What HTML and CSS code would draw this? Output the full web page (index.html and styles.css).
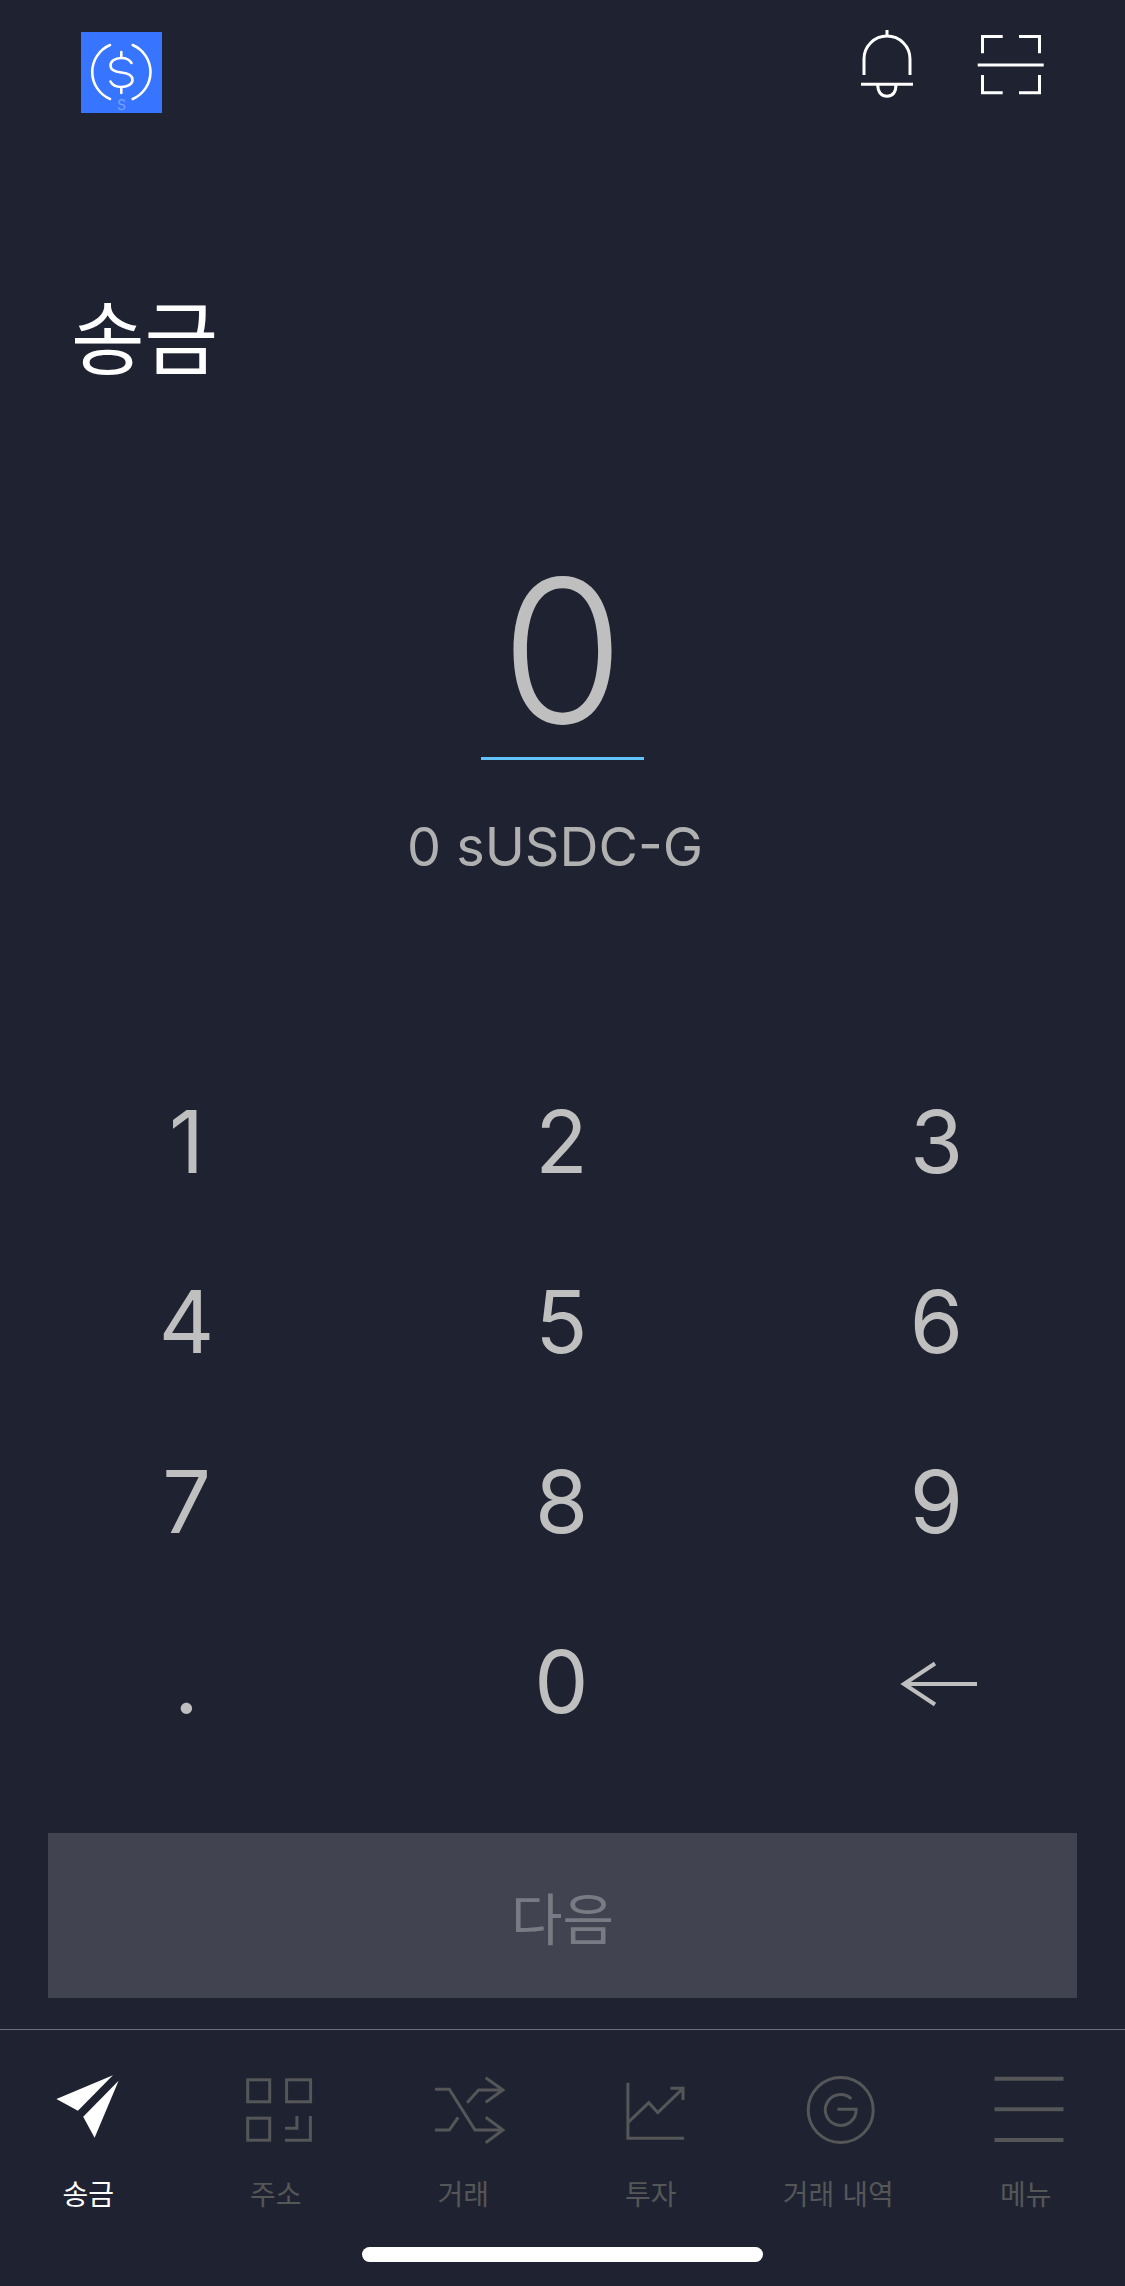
FILE: index.html
```html
<!DOCTYPE html>
<html lang="ko">
<head>
  <meta charset="UTF-8">
  <title>송금</title>
  <link rel="stylesheet" href="styles.css">
</head>
<body>
  <div class="app">
    <header class="header">
      <svg class="logo" viewBox="0 0 81 81" width="81" height="81">
        <rect width="81" height="81" fill="#3774ff"/>
        <g fill="none" stroke="#fff" stroke-width="2.6" stroke-linecap="round">
          <path d="M29 13A29.4 29.4 0 0 0 29 67"/>
          <path d="M51.7 13A29.4 29.4 0 0 1 51.7 67"/>
          <path d="M50.5 31C48.5 27.5 44.5 26 40.3 26C33.5 26 29.5 29.5 29.5 33.5C29.5 38.5 35 40 40.3 40.5C46 41 51.5 43 51.5 48C51.5 52.5 46 55 40.3 55C35.5 55 31.5 53.5 29.5 49.5"/>
          <path d="M40.3 20V25M40.3 56V61"/>
        </g>
        <text class="logo-s" x="40.5" y="78" text-anchor="middle">S</text>
      </svg>
      <div class="header-icons">
        <svg viewBox="0 0 60 72" width="60" height="72" fill="none" stroke="#fff" stroke-width="3">
          <path d="M7 47V31A23 23 0 0 1 53 31V47"/>
          <path d="M30 2V8"/>
          <path d="M4 56.3H56"/>
          <path d="M20.7 56.3C20.7 65 25 68.2 30 68.2C35 68.2 39 65 39 56.3"/>
        </svg>
        <svg viewBox="0 0 72 72" width="72" height="72" fill="none" stroke="#fff" stroke-width="3">
          <path d="M6.5 25.3V8.5H26.7"/>
          <path d="M43 8.5H63.5V25.3"/>
          <path d="M1.7 37H67.7"/>
          <path d="M6.5 47V64.8H26.7"/>
          <path d="M43 64.8H63.5V47"/>
        </svg>
      </div>
    </header>

    <h1 class="title">송금</h1>

    <div class="amount">0</div>
    <div class="converted">0 sUSDC-G</div>

    <div class="keypad">
      <div class="key">1</div>
      <div class="key">2</div>
      <div class="key">3</div>
      <div class="key">4</div>
      <div class="key">5</div>
      <div class="key">6</div>
      <div class="key">7</div>
      <div class="key">8</div>
      <div class="key">9</div>
      <div class="key">.</div>
      <div class="key">0</div>
      <div class="key">
        <svg class="back" viewBox="0 0 78 46" width="78" height="46" fill="none" stroke="#bfbfbf" stroke-width="4">
          <path d="M78 23H5"/>
          <path d="M36 2.500L5 23L36 43.500"/>
        </svg>
      </div>
    </div>

    <button class="next">다음</button>

    <nav class="nav">
      <div class="nav-item active">
        <svg viewBox="0 0 100 72" width="100" height="72" fill="#fff">
          <path d="M18.400 25L74.900 1.300L39.900 36.700Z"/>
          <path d="M80.600 6.700L45.200 42.700L56.600 63.700Z"/>
        </svg>
        <span>송금</span>
      </div>
      <div class="nav-item">
        <svg viewBox="0 0 100 72" width="100" height="72" fill="none" stroke="#555658" stroke-width="3">
          <rect x="21.700" y="5.800" width="22" height="22"/>
          <rect x="60.600" y="5.800" width="24" height="22"/>
          <rect x="21.700" y="44.200" width="22" height="22"/>
          <path d="M84.400 42V66.200H59"/>
          <path d="M59 54.300H70.900V42"/>
        </svg>
        <span>주소</span>
      </div>
      <div class="nav-item">
        <svg viewBox="0 0 100 72" width="100" height="72" fill="none" stroke="#555658" stroke-width="3">
          <path d="M22 15.300H36.300L62 56H88.800"/>
          <path d="M72.700 3.700L89.900 16L72.700 28.300"/>
          <path d="M88.800 16H65.600L54.100 28.700"/>
          <path d="M72.700 43.300L89.900 56L72.700 68.700"/>
          <path d="M22 56H36.300L45.200 43.300"/>
        </svg>
        <span>거래</span>
      </div>
      <div class="nav-item">
        <svg viewBox="0 0 100 72" width="100" height="72" fill="none" stroke="#555658" stroke-width="3">
          <path d="M26.900 8.700V64.300H83.100"/>
          <path d="M26.900 48.700L47.800 28.700L56.800 38.700L82 14.300"/>
          <path d="M69.400 14.300H82V26"/>
        </svg>
        <span>투자</span>
      </div>
      <div class="nav-item">
        <svg viewBox="0 0 100 72" width="100" height="72" fill="none" stroke="#555658" stroke-width="3">
          <circle cx="52.700" cy="36" r="32.500"/>
          <path d="M63.300 24.800A15.400 15.400 0 1 0 68.100 35.300H49.500"/>
        </svg>
        <span>거래 내역</span>
      </div>
      <div class="nav-item">
        <svg viewBox="0 0 100 72" width="100" height="72" fill="none" stroke="#555658" stroke-width="4">
          <path d="M18.500 4.700H87.500"/>
          <path d="M18.500 35.300H87.500"/>
          <path d="M18.500 66H87.500"/>
        </svg>
        <span>메뉴</span>
      </div>
    </nav>

    <div class="home-bar"></div>
  </div>
</body>
</html>
```

FILE: styles.css
```css
html, body { margin: 0; padding: 0; background: #1f2331; }
.app { width: 1125px; height: 2286px; overflow: hidden; font-family: Inter, "Noto Sans CJK KR", sans-serif; }

.header { display: flex; justify-content: space-between; align-items: flex-start; height: 113px; padding: 0 77px 0 81px; }
.logo { display: block; margin-top: 32px; }
.logo-s { font-family: Inter, sans-serif; font-size: 14px; fill: #7aa2ff; }
.header-icons { display: flex; gap: 59px; padding-top: 28px; }
.header-icons svg { display: block; }

.title { margin: 170px 0 0 71px; font-family: "Noto Sans CJK KR", sans-serif; font-size: 80px; font-weight: 400; line-height: 100px; color: #fff; }

.amount { width: 163px; height: 207px; margin: 167px auto 0; border-bottom: 3px solid #62c3fb; text-align: center; font-size: 200px; font-weight: 300; line-height: 200px; color: #bfbfbf; }
.converted { margin-top: 57px; padding-right: 15px; text-align: center; font-size: 54px; font-weight: 400; line-height: 60px; color: #b0b0b0; }

.keypad { display: grid; grid-template-columns: repeat(3, 375px); grid-auto-rows: 180px; margin: 175px 0 0 -1px; }
.key { display: flex; align-items: center; justify-content: center; font-size: 86px; font-weight: 400; color: #bfbfbf; }
.back { margin: 3px 0 0 3px; }

.next { display: block; width: 1029px; height: 165px; margin: 61px 0 0 48px; padding: 0; border: 0; background: #414450; font-family: "Noto Sans CJK KR", sans-serif; font-size: 56px; color: #797b84; }

.nav { display: grid; grid-template-columns: repeat(6, 187.5px); margin: 31px 0 0; padding: 44px 0 0; border-top: 1px solid #6b6d75; }
.nav-item { display: flex; flex-direction: column; align-items: center; margin-left: -11px; color: #555658; font-family: "Noto Sans CJK KR", sans-serif; font-size: 28px; line-height: 35px; white-space: nowrap; }
.nav-item svg { display: block; margin-bottom: 30px; }
.nav-item.active { color: #fff; }

.home-bar { width: 401px; height: 15px; margin: 36px auto 0; border-radius: 8px; background: #fff; }
```
